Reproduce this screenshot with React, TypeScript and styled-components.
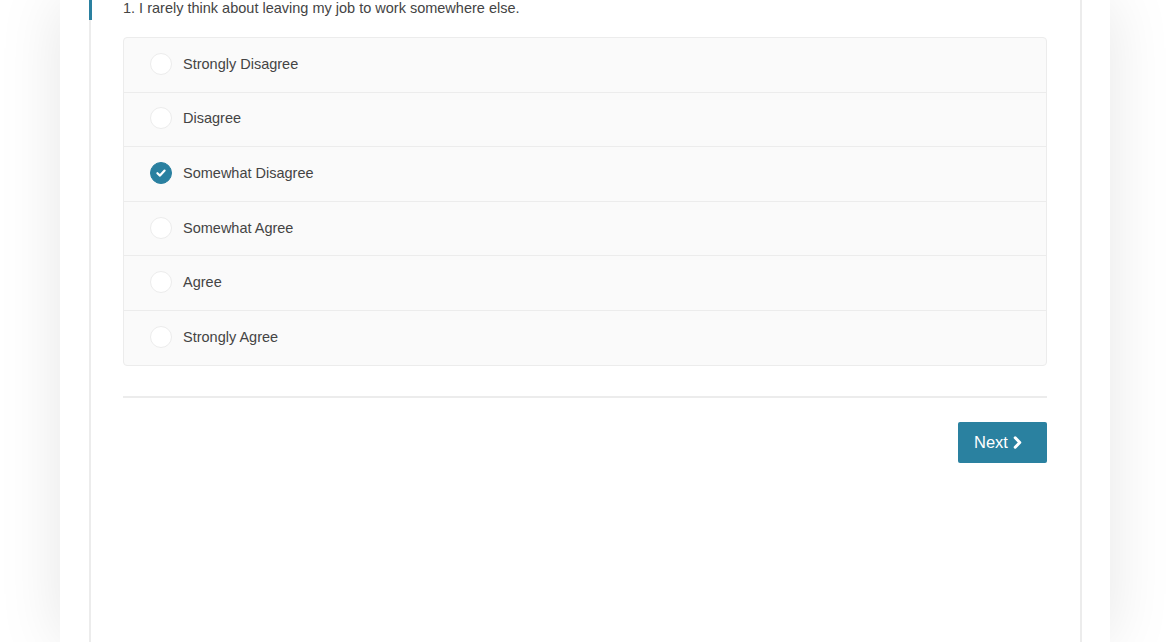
import React, { useState } from 'react'
import styled, { createGlobalStyle } from 'styled-components'

const GlobalStyle = createGlobalStyle`
  html, body {
    margin: 0;
    padding: 0;
    background: #fff;
    font-family: 'Liberation Sans', Arial, sans-serif;
    color: #333;
  }
`

const options = [
  'Strongly Disagree',
  'Disagree',
  'Somewhat Disagree',
  'Somewhat Agree',
  'Agree',
  'Strongly Agree'
]

const App = () => {
  const [selected, setSelected] = useState(2)

  return (
    <>
      <GlobalStyle />
      <PageLayout>
        <Sheet>
          <Panel>
            <Question>
              1. I rarely think about leaving my job to work somewhere else.
            </Question>
            <OptionList>
              {options.map((label, index) => (
                <OptionItem key={label} onClick={() => setSelected(index)}>
                  <Radio checked={selected === index}>
                    {selected === index && (
                      <svg width="12" height="12" viewBox="0 0 12 12">
                        <path
                          d="M2.4 6.2 L5 8.6 L9.6 3.6"
                          fill="none"
                          stroke="#fff"
                          strokeWidth="2.2"
                          strokeLinecap="round"
                          strokeLinejoin="round"
                        />
                      </svg>
                    )}
                  </Radio>
                  <OptionLabel>{label}</OptionLabel>
                </OptionItem>
              ))}
            </OptionList>
            <Divider />
            <Actions>
              <NextButton>
                Next
                <svg width="10" height="13" viewBox="0 0 10 13">
                  <path
                    d="M2.2 1.8 L6.8 6.5 L2.2 11.2"
                    fill="none"
                    stroke="#fff"
                    strokeWidth="3"
                    strokeLinecap="round"
                    strokeLinejoin="round"
                  />
                </svg>
              </NextButton>
            </Actions>
          </Panel>
        </Sheet>
      </PageLayout>
    </>
  )
}

const PageLayout = styled.div`
  display: flex;
  justify-content: center;
  min-height: 100vh;
  overflow: hidden;
`

const Sheet = styled.div`
  display: flex;
  width: 1050px;
  min-height: 100vh;
  padding: 0 28px 0 29px;
  box-sizing: border-box;
  background: #fff;
  box-shadow: 0 0 60px rgba(0, 0, 0, 0.1);
`

const Panel = styled.div`
  flex: 1;
  padding: 0 33px 0 32px;
  border-left: 2px solid #ececec;
  border-right: 2px solid #ececec;
`

const Question = styled.h2`
  margin: -2px 0 0 -34px;
  padding: 0 0 2px 31px;
  border-left: 3px solid #2a80a0;
  font-size: 14.5px;
  font-weight: normal;
  line-height: 20px;
  color: #444;
`

const OptionList = styled.ul`
  margin: 17px 0 0;
  padding: 0;
  list-style: none;
  background: #fafafa;
  border: 1px solid #ececec;
  border-radius: 4px;
`

const OptionItem = styled.li`
  display: flex;
  align-items: center;
  box-sizing: border-box;
  height: 54.6px;
  padding: 0 0 2px 26px;
  border-bottom: 1px solid #ececec;
  cursor: pointer;

  &:last-child {
    height: 53.6px;
    border-bottom: none;
  }
`

const Radio = styled.span<{ checked: boolean }>`
  display: flex;
  align-items: center;
  justify-content: center;
  width: 22px;
  height: 22px;
  box-sizing: border-box;
  border-radius: 50%;
  border: 1px solid ${({ checked }) => (checked ? '#2a80a0' : '#ececec')};
  background: ${({ checked }) => (checked ? '#2a80a0' : '#fff')};
  margin: 0 11px 0 0;
`

const OptionLabel = styled.span`
  font-size: 14.5px;
  color: #444;
`

const Divider = styled.hr`
  margin: 30px 0 0;
  border: none;
  border-top: 2px solid #ececec;
`

const Actions = styled.div`
  display: flex;
  justify-content: flex-end;
  padding: 24px 0 0;
`

const NextButton = styled.button`
  display: flex;
  align-items: center;
  gap: 5px;
  width: 89px;
  height: 41px;
  padding: 0 0 0 16px;
  border: none;
  border-radius: 2px;
  background: #2a81a0;
  color: #fff;
  font-family: 'Liberation Sans', Arial, sans-serif;
  font-size: 16.5px;
  cursor: pointer;

  svg {
    margin: 1px 0 0;
  }
`

export default App
